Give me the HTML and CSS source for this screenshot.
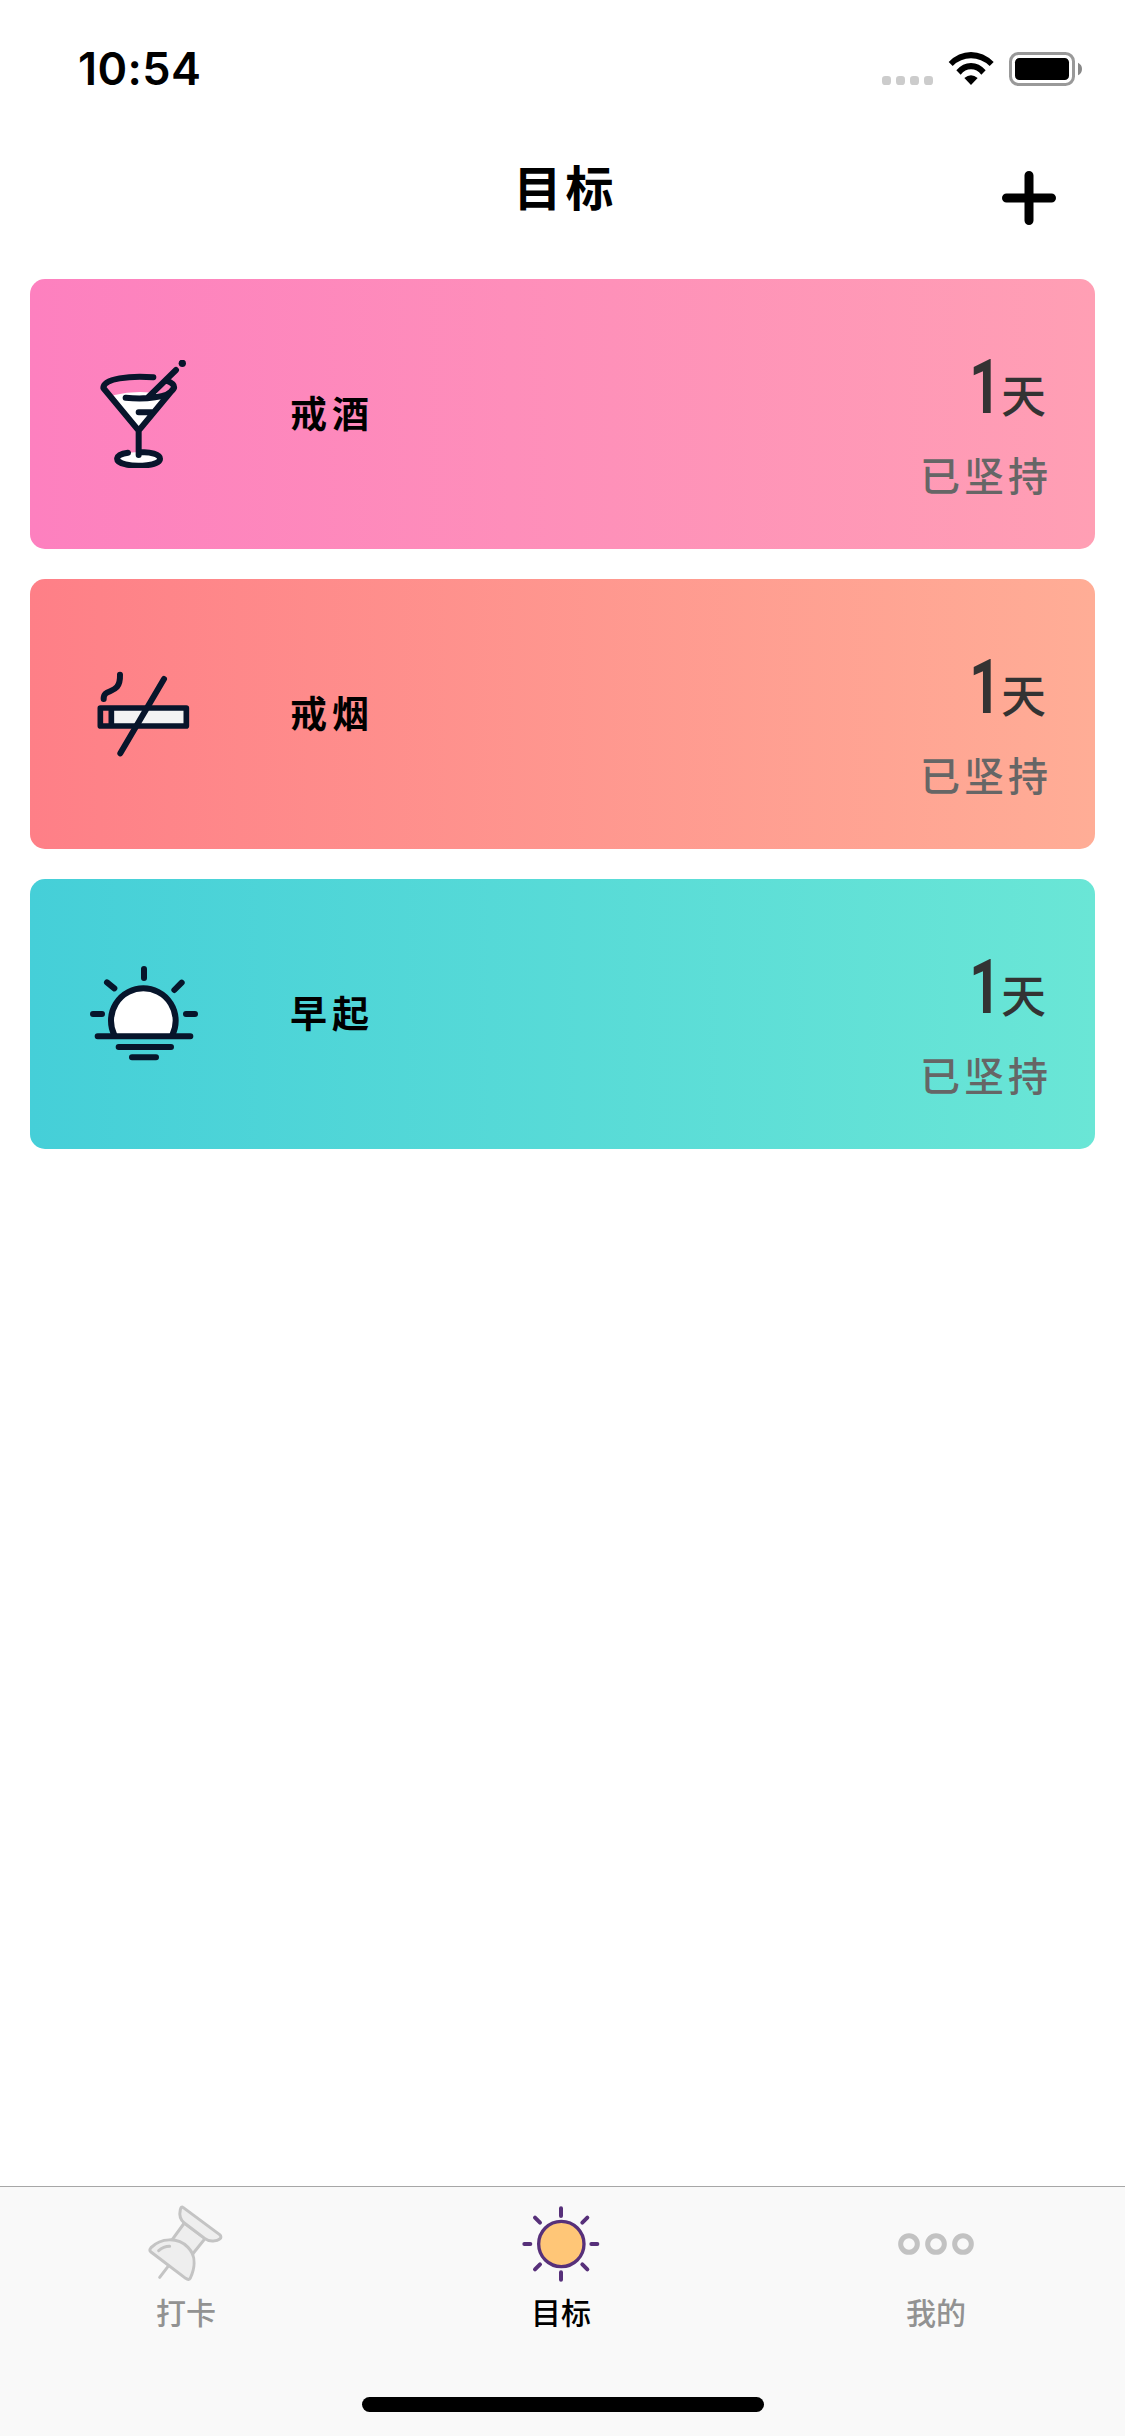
FILE: index.html
```html
<!DOCTYPE html>
<html lang="zh-CN">
<head>
<meta charset="utf-8">
<title>目标</title>
<link rel="stylesheet" href="styles.css">
</head>
<body>
<div class="screen">
  <div class="status">
    <span class="clock">10:54</span>
    <svg class="status-icons" viewBox="120 90 612 111">
      <g fill="#ccc"><rect x="126" y="168" width="27" height="27" rx="10"/><rect x="168" y="168" width="27" height="27" rx="10"/><rect x="210" y="168" width="27" height="27" rx="10"/><rect x="252" y="168" width="27" height="27" rx="10"/></g>
      <path d="M326 126Q355 96 393 96T461 126L449 138Q424 115 393 115T338 138ZM349 151Q368 129 393 129T437 151L424 164Q411 148 393 148T362 164ZM373 174Q393 157 413 174L393 195Z"/>
      <rect x="511.500" y="100.500" width="189" height="93" rx="24" fill="none" stroke="#999" stroke-width="9"/>
      <rect x="525" y="114" width="162" height="66" rx="13"/>
      <path d="M714 128Q726 134 726 147T714 166Z" fill="#888"/>
    </svg>
  </div>
  <header class="header">
    <h1 class="title">目标</h1>
    <svg class="plus" viewBox="0 0 54 54"><path d="M27 4.500V49.500M4.500 27H49.500"/></svg>
  </header>
  <main class="goals">
    <section class="card pink">
      <svg class="goal-icon" viewBox="210 270 324 324">
        <path class="white" d="M280 376Q360 356 443 376L356 480Z"/>
        <ellipse class="white" cx="357" cy="566" rx="62" ry="20"/>
        <path class="line" d="M400 322C330 316 250 326 250 354L356 482L462 354C464 344 453 337 440 332M317 383C370 389 450 384 462 354M384 382L468 300M356 427H400M356 482V555M324 548C283 553 281 576 317 583C352 591 420 587 420 566C420 553 390 545 364 547"/>
        <circle cx="487" cy="280" r="11" fill="#07152b"/>
      </svg>
      <h2 class="name">戒酒</h2>
      <div class="progress"><p class="days"><span class="num">1</span><span>天</span></p><p class="caption">已坚持</p></div>
    </section>
    <section class="card coral">
      <svg class="goal-icon" viewBox="210 270 324 324">
        <rect x="275" y="415" width="222" height="52" fill="#f3f3f3"/>
        <path class="line" d="M300 314C302 380 250 350 251 387M432 327L301 550"/>
        <path class="line thin" d="M241 414H499V468H241ZM274 414V468"/>
      </svg>
      <h2 class="name">戒烟</h2>
      <div class="progress"><p class="days"><span class="num">1</span><span>天</span></p><p class="caption">已坚持</p></div>
    </section>
    <section class="card teal">
      <svg class="goal-icon" viewBox="210 270 324 324">
        <path class="line disc" d="M283 495A97 97 0 1 1 457 495"/>
        <path class="line" d="M233 499H511M296 531H453M336 562H408M372 297V324M261 337L283 355M485 338L463 360M219 432H246M498 432H525"/>
      </svg>
      <h2 class="name">早起</h2>
      <div class="progress"><p class="days"><span class="num">1</span><span>天</span></p><p class="caption">已坚持</p></div>
    </section>
  </main>
  <footer class="tabbar">
    <nav class="tabs">
      <a class="tab">
        <svg class="tab-icon" viewBox="81 102 240 240">
          <g fill="#eee" stroke="#c4c4c4" stroke-width="9" stroke-linejoin="round" stroke-linecap="round">
            <path d="M149 287L122 322M196 159L158 211L221 252L258 206Z"/>
            <path d="M192 112L302 194C312 203 300 213 283 213Q268 214 258 206L196 159Q178 145 184 119Q187 108 192 112Z"/>
            <path d="M96 233C125 203 177 201 207 232C235 260 225 300 214 324Q210 332 200 325L96 246Q89 241 96 233Z"/>
            <path fill="none" d="M119 242Q133 229 152 229"/>
          </g>
        </svg>
        <span class="label">打卡</span>
      </a>
      <a class="tab active">
        <svg class="tab-icon" viewBox="124 102 240 240">
          <g fill="none" stroke="#57307a" stroke-width="12" stroke-linecap="round">
            <circle cx="245" cy="222" r="68" fill="#ffc677" stroke-width="10"/>
            <path d="M244 115V138M244 307V329M134 222H152M335 222H353M166 143L181 158M323 143L308 158M166 298L181 283M323 298L308 283"/>
          </g>
        </svg>
        <span class="label">目标</span>
      </a>
      <a class="tab">
        <svg class="tab-icon" viewBox="141 102 240 240">
          <g fill="none" stroke="#c2c2c2" stroke-width="15"><circle cx="180" cy="222" r="25"/><circle cx="261" cy="222" r="25"/><circle cx="342" cy="222" r="25"/></g>
        </svg>
        <span class="label">我的</span>
      </a>
    </nav>
    <div class="home"></div>
  </footer>
</div>
</body>
</html>
```

FILE: styles.css
```css
* { box-sizing: border-box; margin: 0; padding: 0; }
body { background: #fff; color: #000; font-family: "Noto Sans CJK SC", sans-serif; }
svg { display: block; flex: none; }
.screen { width: 1125px; height: 2436px; display: flex; flex-direction: column; }
.status { height: 132px; padding: 0 41px 0 78px; display: flex; justify-content: space-between; align-items: flex-start; }
.clock { font: 600 45px/54px Inter, sans-serif; letter-spacing: .4px; margin-top: 42px; }
.status-icons { width: 204px; height: 37px; margin-top: 50px; }
.header { height: 147px; padding-right: 69px; display: grid; grid-template-columns: 54px 1fr 54px; padding-left: 69px; align-items: start; }
.title { grid-column: 2; text-align: center; font-size: 48px; line-height: 60px; font-weight: 700; letter-spacing: 4px; margin-top: 23px; padding-left: 6px; }
.plus { width: 54px; height: 54px; margin-top: 39px; fill: none; stroke: #000; stroke-width: 9; stroke-linecap: round; }
.goals { flex: 1; padding: 0 30px; display: flex; flex-direction: column; gap: 30px; }
.card { height: 270px; border-radius: 15px; padding: 0 43px 0 60px; display: flex; align-items: center; }
.pink { background: linear-gradient(90deg, #fd80bf, #ff9fb4); }
.coral { background: linear-gradient(90deg, #fe7f87, #ffad96); }
.teal { background: linear-gradient(90deg, #45cfd8, #6ae6d6); }
.goal-icon { width: 108px; height: 108px; }
.line { fill: none; stroke: #07152b; stroke-width: 18; stroke-linecap: round; stroke-linejoin: round; }
.thin { stroke-width: 17; }
.white, .disc { fill: #fff; }
.name { flex: 1; margin-left: 92px; padding-bottom: 4px; font-size: 37px; line-height: 50px; font-weight: 700; letter-spacing: 5px; }
.progress { display: flex; flex-direction: column; align-items: flex-end; padding-top: 21px; }
.days { display: flex; align-items: baseline; height: 80px; color: #333; font-size: 45px; line-height: 80px; font-weight: 500; padding-right: 6px; }
.num { font-family: Roboto, sans-serif; font-size: 76px; font-weight: 700; transform: scaleX(.72); transform-origin: right; }
.caption { color: #666; font-size: 40px; line-height: 56px; font-weight: 500; letter-spacing: 4px; margin-top: 19px; }
.tabbar { height: 250px; background: #f9f9f9; border-top: 1px solid #a7a7a7; display: flex; flex-direction: column; align-items: center; }
.tabs { width: 1125px; height: 210px; display: grid; grid-template-columns: repeat(3, 1fr); }
.tab { display: flex; flex-direction: column; align-items: center; padding-top: 17px; padding-right: 3px; color: #929292; }
.active { color: #000; }
.tab-icon { width: 80px; height: 80px; }
.label { font-size: 30px; line-height: 40px; font-weight: 500; margin-top: 7px; }
.home { width: 402px; height: 15px; border-radius: 8px; background: #000; }
```
